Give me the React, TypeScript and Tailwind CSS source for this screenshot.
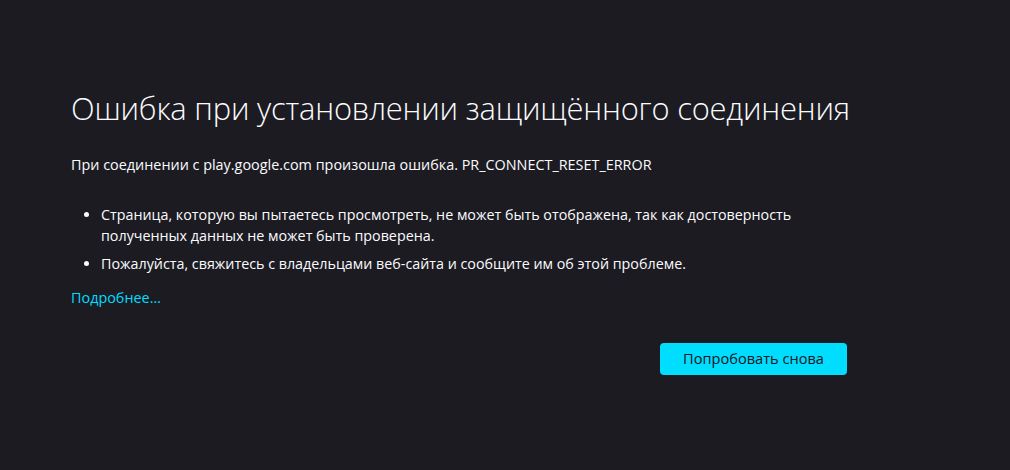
export default function App() {
  return (
    <div className="min-h-[470px] w-full bg-[#1c1b22] text-[#fbfbfe] [font-family:'Open_Sans',sans-serif]">
      <div className="pl-[71px] pt-[86px] w-[847px]">
        <h1 className="text-[30.9px] font-light leading-[44px] tracking-[-0.2px] whitespace-nowrap">
          Ошибка при установлении защищённого соединения
        </h1>
        <p className="mt-[24px] text-[14.4px] leading-[21px]">
          При соединении с play.google.com произошла ошибка. PR_CONNECT_RESET_ERROR
        </p>
        <ul className="mt-[29px] pl-[30px] list-disc text-[14.3px] leading-[21px]">
          <li>
            Страница, которую вы пытаетесь просмотреть, не может быть отображена, так как достоверность
            полученных данных не может быть проверена.
          </li>
          <li className="mt-[7px]">
            Пожалуйста, свяжитесь с владельцами веб-сайта и сообщите им об этой проблеме.
          </li>
        </ul>
        <a href="#" className="block mt-[13px] text-[14.4px] leading-[21px] text-[#00ddff]">
          Подробнее…
        </a>
        <div className="mt-[35px] flex justify-end">
          <button className="h-[32px] w-[187px] rounded-[4px] bg-[#00ddff] text-[14.6px] text-[#15141a]">
            Попробовать снова
          </button>
        </div>
      </div>
    </div>
  );
}
